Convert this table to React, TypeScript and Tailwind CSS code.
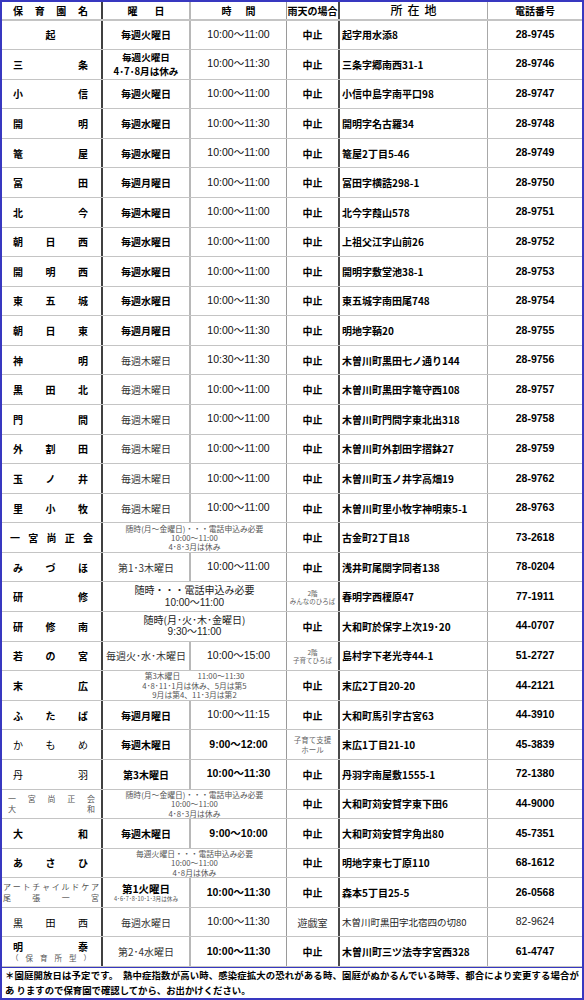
import type { ReactNode } from "react";

const LS = "font-['Liberation_Sans','Noto_Sans_CJK_JP',sans-serif]";

type Row = {
  name: ReactNode;
  day?: ReactNode;
  time?: ReactNode;
  span?: ReactNode;
  rain: ReactNode;
  addr: ReactNode;
  phone: ReactNode;
};

function Spread({ text, className = "" }: { text: string; className?: string }) {
  const chars = text.split(" ");
  return (
    <div className={`flex w-full ${chars.length === 1 ? "justify-center" : "justify-between"} ${className}`}>
      {chars.map((c, i) => (
        <span key={i}>{c}</span>
      ))}
    </div>
  );
}

const nm = (s: string, extra = "font-bold") => <Spread text={s} className={`pl-[11px] pr-[13px] text-[10px] ${extra}`} />;
const nmWide = (s: string) => <Spread text={s} className="px-[8px] text-[10px] font-bold" />;
const db = (s: string) => <span className="text-[10px] font-bold">{s}</span>;
const dr = (s: string) => <span className="text-[10px] text-[#333]">{s}</span>;
const tm = (s: string) => <span className={`${LS} text-[10.5px] text-[#111]`}>{s}</span>;
const tb = (s: string) => <span className={`${LS} text-[10.5px] font-bold`}>{s}</span>;
const stop = <span className="text-[10px] font-bold">中止</span>;
const ad = (s: string) => <span className="text-[10px] font-bold">{s}</span>;
const ph = (s: string) => <span className={`${LS} text-[10.5px] font-bold`}>{s}</span>;

const small = (lines: string[]) => (
  <div className="flex flex-col items-center text-[7.8px] leading-[9.4px] text-[#555]">
    {lines.map((l, i) => (
      <span key={i}>{l}</span>
    ))}
  </div>
);

const tiny = (lines: string[], size = "text-[6.5px] leading-[8px]") => (
  <div className={`flex flex-col items-center ${size} text-[#666]`}>
    {lines.map((l, i) => (
      <span key={i}>{l}</span>
    ))}
  </div>
);

const rows: Row[] = [
  { name: nm("起"), day: db("毎週火曜日"), time: tm("10:00～11:00"), rain: stop, addr: ad("起字用水添8"), phone: ph("28-9745") },
  {
    name: nm("三 条"),
    day: (
      <div className="flex flex-col items-center text-[9.6px] font-bold leading-[14px]">
        <span>毎週火曜日</span>
        <span>4･7･8月は休み</span>
      </div>
    ),
    time: tm("10:00～11:30"),
    rain: stop,
    addr: ad("三条字郷南西31-1"),
    phone: ph("28-9746"),
  },
  { name: nm("小 信"), day: db("毎週火曜日"), time: tm("10:00～11:00"), rain: stop, addr: ad("小信中島字南平口98"), phone: ph("28-9747") },
  { name: nm("開 明"), day: db("毎週水曜日"), time: tm("10:00～11:30"), rain: stop, addr: ad("開明字名古羅34"), phone: ph("28-9748") },
  { name: nm("篭 屋"), day: db("毎週水曜日"), time: tm("10:00～11:00"), rain: stop, addr: ad("篭屋2丁目5-46"), phone: ph("28-9749") },
  { name: nm("冨 田"), day: db("毎週月曜日"), time: tm("10:00～11:00"), rain: stop, addr: ad("冨田字横誥298-1"), phone: ph("28-9750") },
  { name: nm("北 今"), day: db("毎週木曜日"), time: tm("10:00～11:00"), rain: stop, addr: ad("北今字葭山578"), phone: ph("28-9751") },
  { name: nm("朝 日 西"), day: db("毎週水曜日"), time: tm("10:00～11:00"), rain: stop, addr: ad("上祖父江字山前26"), phone: ph("28-9752") },
  { name: nm("開 明 西"), day: db("毎週水曜日"), time: tm("10:00～11:00"), rain: stop, addr: ad("開明字敷堂池38-1"), phone: ph("28-9753") },
  { name: nm("東 五 城"), day: db("毎週水曜日"), time: tm("10:00～11:30"), rain: stop, addr: ad("東五城字南田尾748"), phone: ph("28-9754") },
  { name: nm("朝 日 東"), day: db("毎週月曜日"), time: tm("10:00～11:30"), rain: stop, addr: ad("明地字鞆20"), phone: ph("28-9755") },
  { name: nm("神 明"), day: dr("毎週木曜日"), time: tm("10:30～11:30"), rain: stop, addr: ad("木曽川町黒田七ノ通り144"), phone: ph("28-9756") },
  { name: nm("黒 田 北"), day: dr("毎週木曜日"), time: tm("10:00～11:00"), rain: stop, addr: ad("木曽川町黒田字篭守西108"), phone: ph("28-9757") },
  { name: nm("門 間"), day: dr("毎週木曜日"), time: tm("10:00～11:00"), rain: stop, addr: ad("木曽川町門間字東北出318"), phone: ph("28-9758") },
  { name: nm("外 割 田"), day: dr("毎週木曜日"), time: tm("10:00～11:00"), rain: stop, addr: ad("木曽川町外割田字摺鉢27"), phone: ph("28-9759") },
  { name: nm("玉 ノ 井"), day: dr("毎週木曜日"), time: tm("10:00～11:00"), rain: stop, addr: ad("木曽川町玉ノ井字高畑19"), phone: ph("28-9762") },
  { name: nm("里 小 牧"), day: dr("毎週木曜日"), time: tm("10:00～11:00"), rain: stop, addr: ad("木曽川町里小牧字神明東5-1"), phone: ph("28-9763") },
  {
    name: nmWide("一 宮 尚 正 会"),
    span: small(["随時(月～金曜日)・・・電話申込み必要", "10:00～11:00", "4･8･3月は休み"]),
    rain: stop,
    addr: ad("古金町2丁目18"),
    phone: ph("73-2618"),
  },
  { name: nm("み づ ほ"), day: dr("第1･3木曜日"), time: tm("10:00～11:00"), rain: stop, addr: ad("浅井町尾関字同者138"), phone: ph("78-0204") },
  {
    name: nm("研 修"),
    span: (
      <div className="flex flex-col items-center text-[10px] leading-[12.5px] text-[#222]">
        <span>随時・・・電話申込み必要</span>
        <span className={LS}>10:00～11:00</span>
      </div>
    ),
    rain: tiny(["2階", "みんなのひろば"]),
    addr: ad("春明字西榎原47"),
    phone: ph("77-1911"),
  },
  {
    name: nm("研 修 南"),
    span: (
      <div className="flex flex-col items-center text-[10px] leading-[12.5px] text-[#222]">
        <span>随時(月･火･木･金曜日)</span>
        <span className={LS}>9:30～11:00</span>
      </div>
    ),
    rain: stop,
    addr: ad("大和町於保字上次19･20"),
    phone: ph("44-0707"),
  },
  { name: nm("若 の 宮"), day: dr("毎週火･水･木曜日"), time: tm("10:00～15:00"), rain: tiny(["2階", "子育てひろば"]), addr: ad("島村字下老光寺44-1"), phone: ph("51-2727") },
  {
    name: nm("末 広"),
    span: small(["第3木曜日　　 11:00～11:30", "4･8･11･1月は休み、5月は第5", "9月は第4、11･3月は第2"]),
    rain: stop,
    addr: ad("末広2丁目20-20"),
    phone: ph("44-2121"),
  },
  { name: nm("ふ た ば"), day: db("毎週月曜日"), time: tm("10:00～11:15"), rain: stop, addr: ad("大和町馬引字古宮63"), phone: ph("44-3910") },
  { name: nm("か も め", "font-normal"), day: db("毎週木曜日"), time: tb("9:00～12:00"), rain: tiny(["子育て支援", "ホール"], "text-[7.5px] leading-[10px]"), addr: ad("末広1丁目21-10"), phone: ph("45-3839") },
  { name: nm("丹 羽", "font-normal"), day: db("第3木曜日"), time: tb("10:00～11:30"), rain: stop, addr: ad("丹羽字南屋敷1555-1"), phone: ph("72-1380") },
  {
    name: (
      <div className="flex w-full flex-col text-[8px] leading-[10px] text-[#555]">
        <Spread text="一 宮 尚 正 会" className="px-[6px]" />
        <Spread text="大 和" className="px-[6px]" />
      </div>
    ),
    span: small(["随時(月～金曜日)・・・電話申込み必要", "10:00～11:00", "4･8･3月は休み"]),
    rain: stop,
    addr: ad("大和町苅安賀字東下田6"),
    phone: ph("44-9000"),
  },
  { name: nm("大 和"), day: db("毎週木曜日"), time: tb("9:00～10:00"), rain: stop, addr: ad("大和町苅安賀字角出80"), phone: ph("45-7351") },
  {
    name: nm("あ さ ひ"),
    span: small(["毎週火曜日・・・電話申込み必要", "10:00～11:00", "4･8月は休み"]),
    rain: stop,
    addr: ad("明地字東七丁原110"),
    phone: ph("68-1612"),
  },
  {
    name: (
      <div className="flex w-full flex-col text-[8px] leading-[10.5px] text-[#555]">
        <Spread text="ア ー ト チ ャ イ ル ド ケ ア" className="pl-[1px] pr-[2px]" />
        <Spread text="尾 張 一 宮" className="pl-[1px] pr-[2px]" />
      </div>
    ),
    day: (
      <div className="flex flex-col items-center">
        <span className="text-[10.5px] font-bold leading-[12px]">第1火曜日</span>
        <span className="text-[5.6px] leading-[8px] text-[#555]">4･6･7･8･10･1･3月は休み</span>
      </div>
    ),
    time: tb("10:00～11:30"),
    rain: stop,
    addr: ad("森本5丁目25-5"),
    phone: ph("26-0568"),
  },
  {
    name: nm("黒 田 西", "font-normal"),
    day: dr("毎週水曜日"),
    time: tm("10:00～11:30"),
    rain: <span className="text-[10px] text-[#333]">遊戯室</span>,
    addr: <span className="text-[9.5px] text-[#222]">木曽川町黒田字北宿四の切80</span>,
    phone: <span className={`${LS} text-[10.5px] text-[#222]`}>82-9624</span>,
  },
  {
    name: (
      <div className="flex w-full flex-col">
        <Spread text="明 泰" className="pl-[11px] pr-[13px] text-[10px] font-bold leading-[12px]" />
        <Spread text="（ 保 育 所 型 ）" className="pl-[9px] pr-[10px] text-[7.5px] leading-[10px] text-[#555]" />
      </div>
    ),
    day: dr("第2･4水曜日"),
    time: tb("10:00～11:30"),
    rain: stop,
    addr: ad("木曽川町三ツ法寺字宮西328"),
    phone: ph("61-4747"),
  },
];

const cell = "flex h-full items-center justify-center overflow-hidden whitespace-nowrap";

function TableRow({ row }: { row: Row }) {
  return (
    <div className="grid h-[29.7px] grid-cols-[101px_88px_96px_53px_148px_1fr] border-b border-[#c4c4c4]">
      <div className={`${cell} border-r-2 border-[#404040]`}>{row.name}</div>
      {row.span ? (
        <div className={`${cell} col-span-2 border-r border-[#9a9a9a]`}>{row.span}</div>
      ) : (
        <>
          <div className={`${cell} border-r-2 border-[#b8b8b8]`}>{row.day}</div>
          <div className={`${cell} border-r border-[#9a9a9a]`}>{row.time}</div>
        </>
      )}
      <div className={`${cell} border-r-2 border-[#4a4a4a]`}>{row.rain}</div>
      <div className={`${cell} justify-start! border-r border-[#a8a8a8] pl-[2px]`}>{row.addr}</div>
      <div className={cell}>{row.phone}</div>
    </div>
  );
}

export default function App() {
  return (
    <div className="h-[1000px] w-[584px] bg-white font-['Noto_Sans_CJK_JP',sans-serif] text-black">
      <div className="flex h-full flex-col border-2 border-[#3838c0]">
        <div className="grid h-[18.5px] shrink-0 grid-cols-[101px_88px_96px_53px_148px_1fr] border-b-2 border-[#c4c4c4] text-[10px] font-bold">
          <div className={`${cell} border-r-2 border-[#404040]`}>
            <Spread text="保 育 園 名" className="pl-[11px] pr-[13px]" />
          </div>
          <div className={`${cell} gap-[17px] border-r-2 border-[#b8b8b8]`}>
            <span>曜</span>
            <span>日</span>
          </div>
          <div className={`${cell} gap-[14px] border-r border-[#9a9a9a]`}>
            <span>時</span>
            <span>間</span>
          </div>
          <div className={`${cell} border-r-2 border-[#4a4a4a]`}>雨天の場合</div>
          <div className={`${cell} gap-[5px] border-r border-[#a8a8a8] text-[12px] font-medium`}>
            <span>所</span>
            <span>在</span>
            <span>地</span>
          </div>
          <div className={cell}>電話番号</div>
        </div>
        {rows.map((r, i) => (
          <TableRow key={i} row={r} />
        ))}
        <div className="flex flex-1 flex-col justify-center border-t border-[#3838c0] px-[3px] text-[9.4px] font-bold leading-[15px]">
          <p className="text-justify [text-align-last:justify] whitespace-nowrap">
            ＊園庭開放日は予定です。　熱中症指数が高い時、感染症拡大の恐れがある時、園庭がぬかるんでいる時等、都合により変更する場合が
          </p>
          <p>あ りますので保育園で確認してから、お出かけください。</p>
        </div>
      </div>
    </div>
  );
}
